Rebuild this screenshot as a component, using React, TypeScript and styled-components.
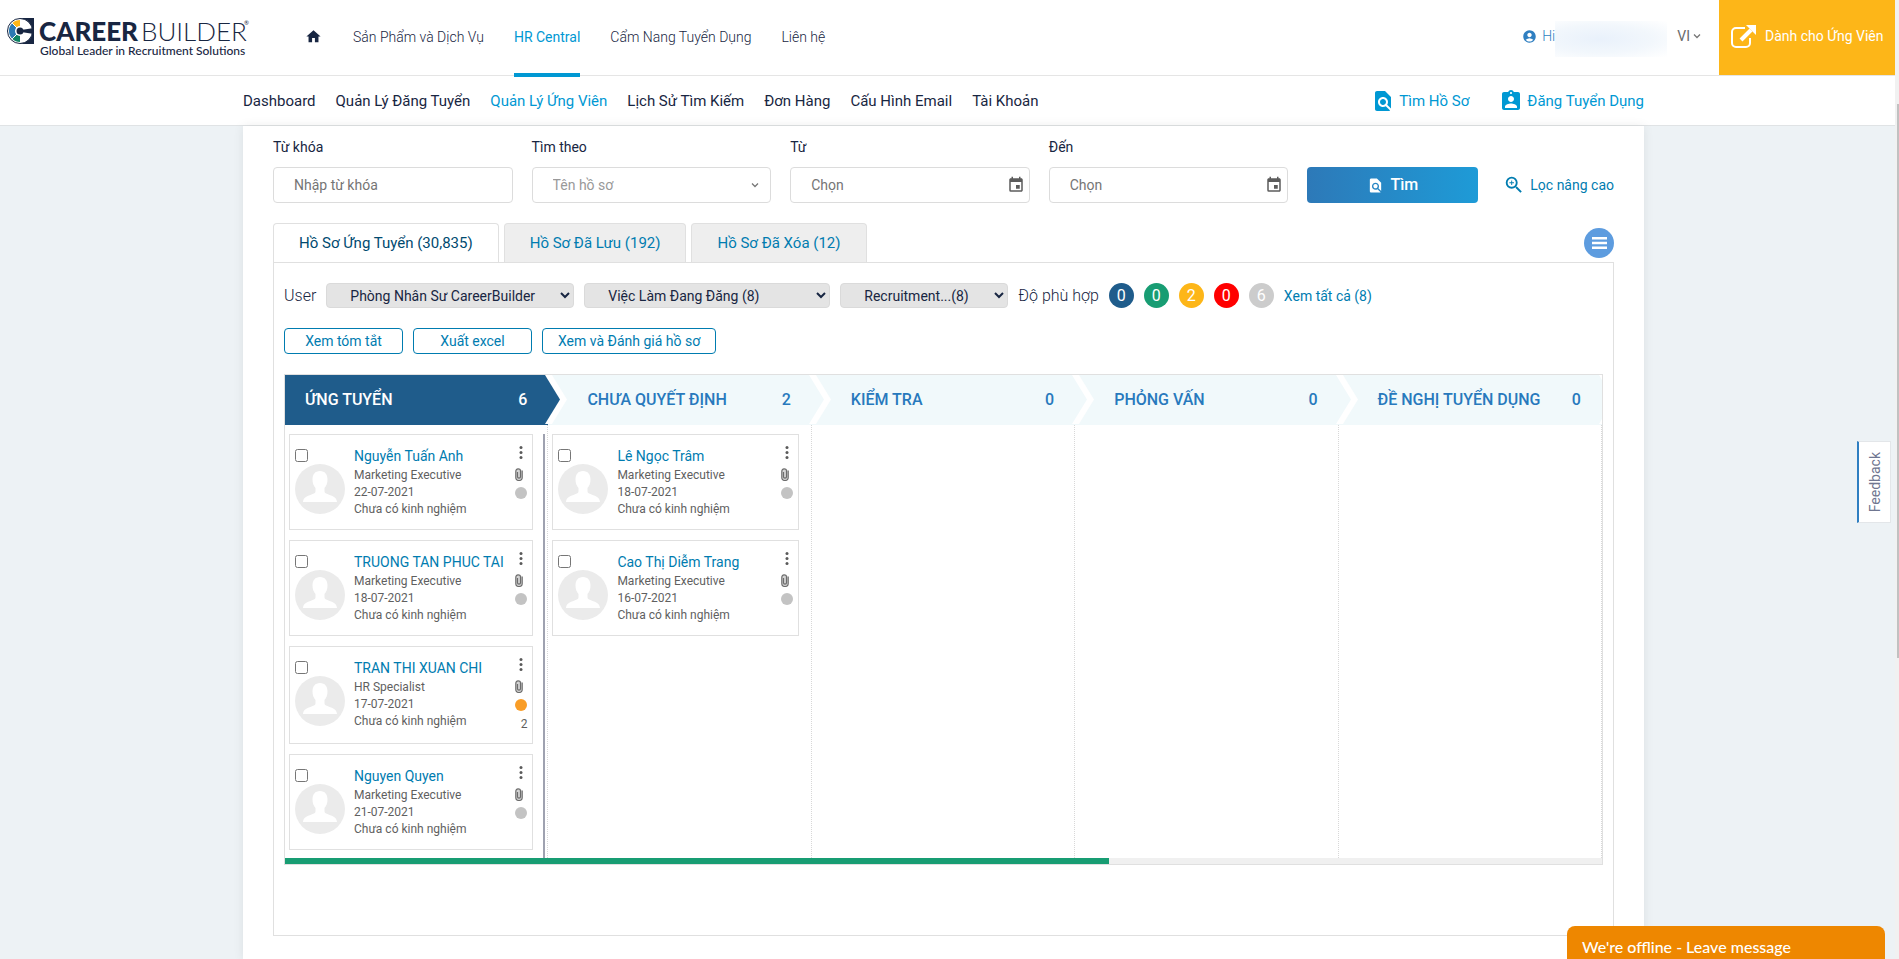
import React from "react";
import styled, { createGlobalStyle } from "styled-components";
import {
  MdAccountCircle,
  MdAssignmentInd,
  MdEvent,
  MdFindInPage,
  MdHome,
  MdZoomIn,
} from "react-icons/md";

const color = {
  ink: "#182642",
  sky: "#0098d3",
  link: "#007cb0",
  navy: "#1f5c8b",
  line: "#e0e0e0",
  green: "#189d73",
  amber: "#fdb618",
};

const GlobalStyle = createGlobalStyle`
  * { box-sizing: border-box; }
  body {
    margin: 0;
    background: #edf2f5;
    color: ${color.ink};
    font: 400 14px/20px Roboto, "Liberation Sans", sans-serif;
  }
  a { color: inherit; text-decoration: none; }
  button, input, select { font: inherit; color: inherit; }
`;

const Page = styled.div`
  display: flex;
  flex-direction: column;
  height: 100vh;
  overflow: hidden;
  padding-right: 4px;
`;

const Header = styled.header`
  display: flex;
  align-items: stretch;
  flex: none;
  height: 76px;
  background: #fff;
  border-bottom: 1px solid #e5e5e5;
`;

const LogoLink = styled.a`
  display: block;
  padding: 16px 0 0 6px;
  width: 306px;
`;

const MainNav = styled.nav`
  display: flex;
  align-items: stretch;
  gap: 30px;
`;

const MainLink = styled.a<{ $active?: boolean }>`
  position: relative;
  z-index: 1;
  display: flex;
  align-items: center;
  height: 77px;
  font-size: 14px;
  font-weight: ${(p) => (p.$active ? 400 : 300)};
  color: ${(p) => (p.$active ? color.sky : color.ink)};
  border-bottom: 4px solid ${(p) => (p.$active ? color.sky : "transparent")};
`;

const HomeLink = styled(MainLink)`
  margin-right: 2px;
  & svg { margin: 0 -1px; }
`;

const Account = styled.div`
  display: flex;
  align-items: center;
  margin-left: auto;
  padding-bottom: 3px;
  color: #2f7fc1;
`;

const Greeting = styled.a`
  display: flex;
  align-items: center;
  gap: 5px;
  font-weight: 300;
`;

const NameMask = styled.span`
  width: 112px;
  height: 36px;
  margin: 6px 10px 0 0;
  background: radial-gradient(ellipse at 40% 50%, #e9f1fb 0%, #f2f7fc 55%, #ffffff 100%);
`;

const Language = styled.button`
  display: flex;
  align-items: center;
  gap: 3px;
  margin-right: 18px;
  padding: 0;
  border: 0;
  background: none;
  color: #6b6b6b;
`;

const CandidateLink = styled.a`
  display: flex;
  align-items: center;
  gap: 9px;
  width: 176px;
  padding: 0 0 4px 12px;
  background: ${color.amber};
  color: #fff;
  white-space: nowrap;
`;

const SubHeader = styled.div`
  flex: none;
  height: 50px;
  padding-right: 8px;
  background: #fff;
  border-bottom: 1px solid #e0e3e5;
`;

const SubInner = styled.div`
  display: flex;
  align-items: center;
  gap: 20px;
  width: 100%;
  max-width: 1401px;
  height: 49px;
  margin: 0 auto;
  font-size: 15px;
`;

const SubLink = styled.a<{ $active?: boolean }>`
  color: ${(p) => (p.$active ? color.sky : color.ink)};
  white-space: nowrap;
`;

const ToolLink = styled.a<{ $first?: boolean }>`
  display: flex;
  align-items: center;
  gap: 4px;
  margin-left: ${(p) => (p.$first ? "auto" : "10px")};
  color: ${color.sky};
  white-space: nowrap;
`;

const Main = styled.main`
  flex: 1;
  padding-right: 8px;
`;

const Sheet = styled.div`
  width: 100%;
  max-width: 1401px;
  min-height: 100%;
  margin: 0 auto;
  padding: 11px 30px 24px;
  background: #fff;
  box-shadow: 0 0 10px rgba(0, 0, 0, 0.08);
`;

const SearchForm = styled.form`
  display: flex;
  align-items: flex-end;
  gap: 19px;
`;

const Field = styled.div`
  flex: 1;
  min-width: 0;
`;

const FieldLabel = styled.label`
  display: block;
  margin-bottom: 10px;
`;

const FieldBox = styled.div`
  display: flex;
  align-items: center;
  height: 36px;
  padding: 0 4px 0 20px;
  border: 1px solid #dcdcdc;
  border-radius: 4px;
  background: #fff;
  color: #5c5c5c;
`;

const TextInput = styled.input`
  flex: 1;
  min-width: 0;
  padding: 0;
  border: 0;
  outline: 0;
  background: none;
  &::placeholder { color: #757575; opacity: 1; }
`;

const PlainSelect = styled.select`
  flex: 1;
  min-width: 0;
  padding: 0;
  border: 0;
  outline: 0;
  appearance: none;
  background: none;
  color: #999;
`;

const ArrowSlot = styled.span`
  display: flex;
  margin-right: 7px;
  pointer-events: none;
`;

const SearchButton = styled.button`
  display: flex;
  align-items: center;
  justify-content: center;
  gap: 6px;
  width: 171px;
  height: 36px;
  border: 0;
  border-radius: 4px;
  background: linear-gradient(90deg, #2d79b8, #1e9bd7);
  color: #fff;
  font-size: 16px;
  font-weight: 500;
`;

const AdvancedLink = styled.a`
  display: flex;
  align-items: center;
  gap: 5px;
  height: 36px;
  margin-left: 6px;
  color: ${color.link};
  white-space: nowrap;
`;

const TabRow = styled.div`
  display: flex;
  align-items: flex-end;
  gap: 5px;
  margin-top: 20px;
`;

const Tab = styled.button<{ $active?: boolean }>`
  height: 39px;
  padding: 0 25px;
  border: 1px solid ${color.line};
  border-bottom: 0;
  border-radius: 4px 4px 0 0;
  background: ${(p) => (p.$active ? "#fff" : "#eee")};
  color: ${(p) => (p.$active ? "#004a70" : color.link)};
  font-size: 15px;
  white-space: nowrap;
`;

const ViewButton = styled.button`
  display: flex;
  align-items: center;
  justify-content: center;
  width: 30px;
  height: 30px;
  margin: 0 0 4px auto;
  padding: 0;
  border: 0;
  border-radius: 50%;
  background: #5d9cdf;
`;

const Panel = styled.section`
  min-height: 674px;
  padding: 20px 10px;
  border: 1px solid ${color.line};
`;

const FilterRow = styled.div`
  display: flex;
  align-items: center;
  gap: 10px;
`;

const FilterLabel = styled.label`
  font-size: 16px;
  font-weight: 300;
  white-space: nowrap;
`;

const FilterSelect = styled.select<{ $width: number }>`
  width: ${(p) => p.$width}px;
  height: 25px;
  padding: 0 2px 0 19px;
  border: 1px solid #dadada;
  border-radius: 4px;
  background-color: #e4e4e4;
`;

const Badge = styled.button<{ $tone: string }>`
  width: 25px;
  height: 25px;
  padding: 0;
  border: 0;
  border-radius: 50%;
  background: ${(p) => p.$tone};
  color: #fff;
  font-size: 16px;
  line-height: 23px;
`;

const AllLink = styled.a`
  color: ${color.link};
  white-space: nowrap;
`;

const ActionRow = styled.div`
  display: flex;
  gap: 10px;
  margin: 20px 0;
`;

const ActionButton = styled.button`
  min-width: 119px;
  height: 26px;
  padding: 0 15px;
  border: 1px solid ${color.link};
  border-radius: 4px;
  background: #fff;
  color: ${color.link};
  white-space: nowrap;
`;

const Board = styled.div`
  border: 1px solid ${color.line};
`;

const Columns = styled.div`
  display: flex;
  height: 483px;
  overflow: hidden;
`;

const Column = styled.section`
  display: flex;
  flex-direction: column;
  flex: 0 0 20%;
`;

const StageHead = styled.h2<{ $active?: boolean }>`
  position: relative;
  display: flex;
  align-items: center;
  justify-content: space-between;
  height: 50px;
  margin: 0;
  padding: 0 21px 0 ${(p) => (p.$active ? 20 : 39)}px;
  background: ${(p) => (p.$active ? color.navy : "#f1f9fb")};
  color: ${(p) => (p.$active ? "#fff" : "#2879bd")};
  font-size: 16px;
  font-weight: 500;
  line-height: 20px;
  white-space: nowrap;
`;

const Chevron = styled.svg`
  position: absolute;
  top: 0;
  right: -19px;
  z-index: 1;
`;

const StageBody = styled.div`
  flex: 1;
  padding: 9px 2px 0 4px;
  border-right: 1px dotted #d8d8d8;
`;

const CardList = styled.div<{ $scroll?: boolean }>`
  display: flex;
  flex-direction: column;
  gap: 10px;
  height: 100%;
  padding-right: 10px;
  border-right: ${(p) => (p.$scroll ? "2px solid #9fa2b0" : "0")};
`;

const Card = styled.article`
  display: flex;
  min-height: 96px;
  padding: 11px 5px 10px;
  border: 1px solid ${color.line};
  background: #fff;
`;

const Portrait = styled.div`
  display: flex;
  flex-direction: column;
  width: 59px;
`;

const Tick = styled.input`
  width: 13px;
  height: 13px;
  margin: 3px 0 2px;
`;

const Details = styled.div`
  flex: 1;
  min-width: 0;
  color: #5f5f5f;
  font-size: 12px;
  line-height: 17px;
  white-space: nowrap;
`;

const Name = styled.a`
  display: block;
  margin-bottom: 1px;
  font-size: 14px;
  line-height: 20px;
  color: ${color.link};
`;

const Side = styled.div`
  display: flex;
  flex-direction: column;
  align-items: flex-end;
  width: 13px;
  color: #5f5f5f;
`;

const MoreButton = styled.button`
  display: flex;
  width: 13px;
  height: 19px;
  padding: 0 4px 0 5px;
  border: 0;
  background: none;
`;

const Clip = styled.svg`
  margin: 3px 4px 6px 0;
`;

const Dot = styled.span<{ $tone: string }>`
  width: 12px;
  height: 12px;
  border-radius: 50%;
  background: ${(p) => p.$tone};
`;

const Score = styled.span`
  margin-top: 5px;
  line-height: 17px;
  font-size: 12px;
`;

const ScrollTrack = styled.div`
  height: 6px;
  background: #f0f0f0;
`;

const ScrollThumb = styled.div`
  width: 62.6%;
  height: 6px;
  background: ${color.green};
`;

const Feedback = styled.button`
  position: fixed;
  top: 441px;
  right: 8px;
  display: flex;
  align-items: center;
  justify-content: center;
  width: 34px;
  height: 82px;
  padding: 0;
  border: 1px solid #e3e6e9;
  border-left: 2px solid #2f7fc1;
  background: #fff;
  color: #6f7690;
  & span {
    writing-mode: vertical-rl;
    transform: rotate(180deg);
  }
`;

const ChatBar = styled.button`
  position: fixed;
  right: 14px;
  bottom: 0;
  width: 318px;
  height: 33px;
  padding: 9px 15px 0;
  border: 0;
  border-radius: 8px 8px 0 0;
  background: #ee8700;
  color: #fff;
  font: 500 16px/20px Lato, "Liberation Sans", sans-serif;
  text-align: left;
`;

const PageTrack = styled.div`
  position: fixed;
  top: 0;
  right: 0;
  bottom: 0;
  width: 4px;
  padding: 104px 0 0 2px;
  background: #f1f1f1;
`;

const PageThumb = styled.div`
  height: 554px;
  background: #c1c1c1;
`;

const Logo = () => (
  <svg width="244" height="44" viewBox="0 0 244 44" role="img" aria-label="CareerBuilder">
    <path d="M14 2h14v26H14z" fill={color.ink} />
    <circle cx="14" cy="15" r="12.500" fill="#fff" stroke={color.ink} strokeWidth="1" />
    <path d="M14 15 6.200 7.200A11 11 0 0 1 14 4z" fill={color.amber} />
    <path d="M14 15 6.200 22.800A11 11 0 0 1 6.200 7.200z" fill="#2a79b3" />
    <path d="M14 15v11a11 11 0 0 1-7.800-3.200z" fill="#0d8262" />
    <path d="M14 15 6.200 7.200M14 15 6.200 22.800" stroke="#fff" strokeWidth="1" />
    <circle cx="14" cy="15" r="5" fill="#fff" />
    <path d="M15 14 28 12v6l-13-2z" fill={color.ink} />
    <circle cx="14" cy="15" r="3.500" fill={color.ink} />
    <text x="33" y="25" fontFamily="Lato, sans-serif" fontSize="26" fontWeight="900" fill={color.ink}>CAREER</text>
    <text x="135" y="25" fontFamily="Lato, sans-serif" fontSize="26" fontWeight="300" fill={color.ink}>BUILDER</text>
    <text x="238" y="9" fontFamily="Lato, sans-serif" fontSize="6" fill={color.ink}>®</text>
    <text x="34" y="39" fontFamily="Lato, sans-serif" fontSize="12" fontWeight="500" fill={color.ink}>
      Global Leader in Recruitment Solutions
    </text>
  </svg>
);

const Arrow = () => (
  <svg width="8" height="8" viewBox="0 0 8 8" fill="none" stroke="#777" strokeWidth="1.3">
    <path d="M1 2.500 4 5.500 7 2.500" />
  </svg>
);

const LeaveIcon = () => (
  <svg width="25" height="24" viewBox="0 0 25 24" fill="none">
    <path d="M14 4H5a4 4 0 0 0-4 4v11a4 4 0 0 0 4 4h10a4 4 0 0 0 4-4v-5" stroke="#fff" strokeWidth="2" />
    <path d="M10 16 20 6" stroke="#fff" strokeWidth="4" />
    <path d="M15 1h10v10z" fill="#fff" />
  </svg>
);

const Avatar = () => (
  <svg width="50" height="50" viewBox="0 0 50 50" aria-hidden="true">
    <circle cx="25" cy="25" r="25" fill="#ebebeb" />
    <path
      d="M25 7c5 0 7.500 3.500 7.500 8.500 0 3.500-1 6.500-3 8.500v3.500c0 1.500 1.500 2 4 3 5 1.800 8 2.800 8.500 7.500H8c.5-4.700 3.500-5.700 8.500-7.500 2.500-1 4-1.500 4-3V24c-2-2-3-5-3-8.500C17.500 10.500 20 7 25 7z"
      fill="#fff"
    />
  </svg>
);

const tabs = ["Hồ Sơ Ứng Tuyển (30,835)", "Hồ Sơ Đã Lưu (192)", "Hồ Sơ Đã Xóa (12)"];

const subLinks = [
  "Dashboard",
  "Quản Lý Đăng Tuyển",
  "Quản Lý Ứng Viên",
  "Lịch Sử Tìm Kiếm",
  "Đơn Hàng",
  "Cấu Hình Email",
  "Tài Khoản",
];

const filters = [
  { id: "user", label: "Phòng Nhân Sư CareerBuilder", width: 248 },
  { id: "job", label: "Việc Làm Đang Đăng (8)", width: 246 },
  { id: "folder", label: "Recruitment...(8)", width: 168 },
];

const badges = [
  { tone: color.navy, count: 0 },
  { tone: color.green, count: 0 },
  { tone: color.amber, count: 2 },
  { tone: "#ff0000", count: 0 },
  { tone: "#cccccc", count: 6 },
];

type Person = { name: string; title: string; date: string; score?: number };

const stages: { title: string; count: number; people: Person[] }[] = [
  {
    title: "ỨNG TUYỂN",
    count: 6,
    people: [
      { name: "Nguyễn Tuấn Anh", title: "Marketing Executive", date: "22-07-2021" },
      { name: "TRUONG TAN PHUC TAI", title: "Marketing Executive", date: "18-07-2021" },
      { name: "TRAN THI XUAN CHI", title: "HR Specialist", date: "17-07-2021", score: 2 },
      { name: "Nguyen Quyen", title: "Marketing Executive", date: "21-07-2021" },
    ],
  },
  {
    title: "CHƯA QUYẾT ĐỊNH",
    count: 2,
    people: [
      { name: "Lê Ngọc Trâm", title: "Marketing Executive", date: "18-07-2021" },
      { name: "Cao Thị Diễm Trang", title: "Marketing Executive", date: "16-07-2021" },
    ],
  },
  { title: "KIỂM TRA", count: 0, people: [] },
  { title: "PHỎNG VẤN", count: 0, people: [] },
  { title: "ĐỀ NGHỊ TUYỂN DỤNG", count: 0, people: [] },
];

const PersonCard = ({ person }: { person: Person }) => (
  <Card>
    <Portrait>
      <Tick type="checkbox" aria-label={person.name} />
      <Avatar />
    </Portrait>
    <Details>
      <Name href="#">{person.name}</Name>
      <div>{person.title}</div>
      <div>{person.date}</div>
      <div>Chưa có kinh nghiệm</div>
    </Details>
    <Side>
      <MoreButton aria-label="Tùy chọn">
        <svg width="4" height="13" viewBox="0 0 4 13" fill="#5a5a5a">
          <circle cx="2" cy="1.500" r="1.500" />
          <circle cx="2" cy="6.500" r="1.500" />
          <circle cx="2" cy="11.500" r="1.500" />
        </svg>
      </MoreButton>
      <Clip width="8" height="13" viewBox="0 0 8 13" fill="none" stroke="#6c6c6c" strokeWidth="1.200">
        <rect x="1" y="1" width="6" height="11" rx="3" fill="#d4d4d4" stroke="none" />
        <path d="M2.500 4v4.800c0 1.800 3 1.800 3 0V3" />
        <path d="M7.200 2.500v7c0 4-6.400 4-6.400 0V3.500C.8 0 5.500 0 5.500 3" />
      </Clip>
      <Dot $tone={person.score ? "#f99d27" : "#c3c3c3"} />
      {person.score && <Score>{person.score}</Score>}
    </Side>
  </Card>
);

export default function App() {
  return (
    <>
      <GlobalStyle />
      <Page>
        <Header>
          <LogoLink href="#"><Logo /></LogoLink>
          <MainNav>
            <HomeLink href="#" aria-label="Trang chủ"><MdHome size={17} /></HomeLink>
            <MainLink href="#">Sản Phẩm và Dịch Vụ</MainLink>
            <MainLink href="#" $active>HR Central</MainLink>
            <MainLink href="#">Cẩm Nang Tuyển Dụng</MainLink>
            <MainLink href="#">Liên hệ</MainLink>
          </MainNav>
          <Account>
            <Greeting href="#"><MdAccountCircle size={15} />Hi</Greeting>
            <NameMask />
            <Language>VI<Arrow /></Language>
          </Account>
          <CandidateLink href="#"><LeaveIcon />Dành cho Ứng Viên</CandidateLink>
        </Header>

        <SubHeader>
          <SubInner>
            {subLinks.map((text, i) => (
              <SubLink href="#" key={text} $active={i === 2}>{text}</SubLink>
            ))}
            <ToolLink href="#" $first><MdFindInPage size={24} />Tìm Hồ Sơ</ToolLink>
            <ToolLink href="#"><MdAssignmentInd size={24} />Đăng Tuyển Dụng</ToolLink>
          </SubInner>
        </SubHeader>

        <Main>
          <Sheet>
            <SearchForm>
              <Field>
                <FieldLabel htmlFor="keyword">Từ khóa</FieldLabel>
                <FieldBox><TextInput id="keyword" placeholder="Nhập từ khóa" /></FieldBox>
              </Field>
              <Field>
                <FieldLabel htmlFor="by">Tìm theo</FieldLabel>
                <FieldBox>
                  <PlainSelect id="by"><option>Tên hồ sơ</option></PlainSelect>
                  <ArrowSlot><Arrow /></ArrowSlot>
                </FieldBox>
              </Field>
              <Field>
                <FieldLabel htmlFor="from">Từ</FieldLabel>
                <FieldBox><TextInput id="from" placeholder="Chọn" /><MdEvent size={18} /></FieldBox>
              </Field>
              <Field>
                <FieldLabel htmlFor="to">Đến</FieldLabel>
                <FieldBox><TextInput id="to" placeholder="Chọn" /><MdEvent size={18} /></FieldBox>
              </Field>
              <SearchButton type="button"><MdFindInPage size={17} />Tìm</SearchButton>
              <AdvancedLink href="#"><MdZoomIn size={22} />Lọc nâng cao</AdvancedLink>
            </SearchForm>

            <TabRow>
              {tabs.map((text, i) => (
                <Tab key={text} $active={i === 0}>{text}</Tab>
              ))}
              <ViewButton aria-label="Danh sách">
                <svg width="15" height="12" viewBox="0 0 15 12" fill="#fff">
                  <path d="M0 0h15v2.500H0zM0 4.800h15v2.500H0zM0 9.500h15V12H0z" />
                </svg>
              </ViewButton>
            </TabRow>

            <Panel>
              <FilterRow>
                <FilterLabel htmlFor="user">User</FilterLabel>
                {filters.map((f) => (
                  <FilterSelect key={f.id} id={f.id} aria-label={f.label} $width={f.width}>
                    <option>{f.label}</option>
                  </FilterSelect>
                ))}
                <FilterLabel as="span">Độ phù hợp</FilterLabel>
                {badges.map((b) => (
                  <Badge key={b.tone} $tone={b.tone}>{b.count}</Badge>
                ))}
                <AllLink href="#">Xem tất cả (8)</AllLink>
              </FilterRow>

              <ActionRow>
                <ActionButton>Xem tóm tắt</ActionButton>
                <ActionButton>Xuất excel</ActionButton>
                <ActionButton>Xem và Đánh giá hồ sơ</ActionButton>
              </ActionRow>

              <Board>
                <Columns>
                  {stages.map((stage, i) => (
                    <Column key={stage.title}>
                      <StageHead $active={i === 0}>
                        <span>{stage.title}</span>
                        <span>{stage.count}</span>
                        <Chevron width="22" height="49" viewBox="0 0 22 49">
                          <path d="M0 0h7l15 24.500L7 49H0z" fill="#fff" />
                          <path d="M0 0l15 24.500L0 49z" fill={i === 0 ? color.navy : "#f1f9fb"} />
                        </Chevron>
                      </StageHead>
                      <StageBody>
                        <CardList $scroll={i === 0}>
                          {stage.people.map((p) => <PersonCard key={p.name} person={p} />)}
                        </CardList>
                      </StageBody>
                    </Column>
                  ))}
                </Columns>
                <ScrollTrack><ScrollThumb /></ScrollTrack>
              </Board>
            </Panel>
          </Sheet>
        </Main>
      </Page>
      <Feedback><span>Feedback</span></Feedback>
      <ChatBar>We're offline - Leave message</ChatBar>
      <PageTrack aria-hidden="true"><PageThumb /></PageTrack>
    </>
  );
}
